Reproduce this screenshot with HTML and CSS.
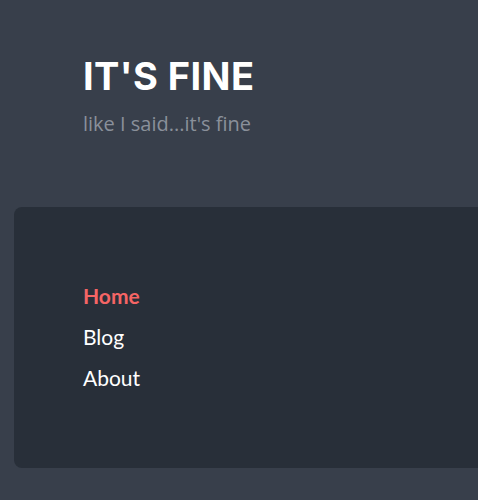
FILE: index.html
```html
<!DOCTYPE html>
<html>
<head>
<meta charset="utf-8">
<link rel="stylesheet" href="styles.css">
</head>
<body>
<div class="page">
  <header class="site-header">
    <h1 class="site-title">IT'S FINE</h1>
    <p class="site-tagline">like I said...it's fine</p>
  </header>
  <nav class="panel">
    <ul class="nav-list">
      <li><a class="nav-link active" href="#">Home</a></li>
      <li><a class="nav-link" href="#">Blog</a></li>
      <li><a class="nav-link" href="#">About</a></li>
    </ul>
  </nav>
</div>
</body>
</html>
```
FILE: styles.css
```css
html, body {
  margin: 0;
  padding: 0;
  background: #ffffff;
}
.page {
  width: 478px;
  height: 500px;
  background: #383f4b;
  box-sizing: border-box;
  padding-top: 52px;
  overflow: hidden;
}
.site-header {
  padding-left: 83px;
  height: 155px;
  box-sizing: border-box;
}
.site-title {
  margin: 0;
  font-family: "Inter", sans-serif;
  font-weight: 700;
  font-size: 38px;
  line-height: 48px;
  color: #ffffff;
  letter-spacing: 0.4px;
}
.site-tagline {
  margin: 0;
  margin-top: 10px;
  font-family: "Open Sans", sans-serif;
  font-weight: 400;
  font-size: 20px;
  line-height: 28px;
  color: #8a909a;
}
.panel {
  margin-left: 14px;
  height: 261px;
  background: #282f39;
  border-radius: 8px 0 0 8px;
  box-sizing: border-box;
  padding: 68px 0 0 69px;
}
.nav-list {
  list-style: none;
  margin: 0;
  padding: 0;
  display: flex;
  flex-direction: column;
}
.nav-link {
  display: block;
  font-family: "Lato", sans-serif;
  font-size: 21px;
  line-height: 41px;
  color: #ffffff;
  text-decoration: none;
}
.nav-link.active {
  color: #f56565;
  font-weight: 700;
}
```
